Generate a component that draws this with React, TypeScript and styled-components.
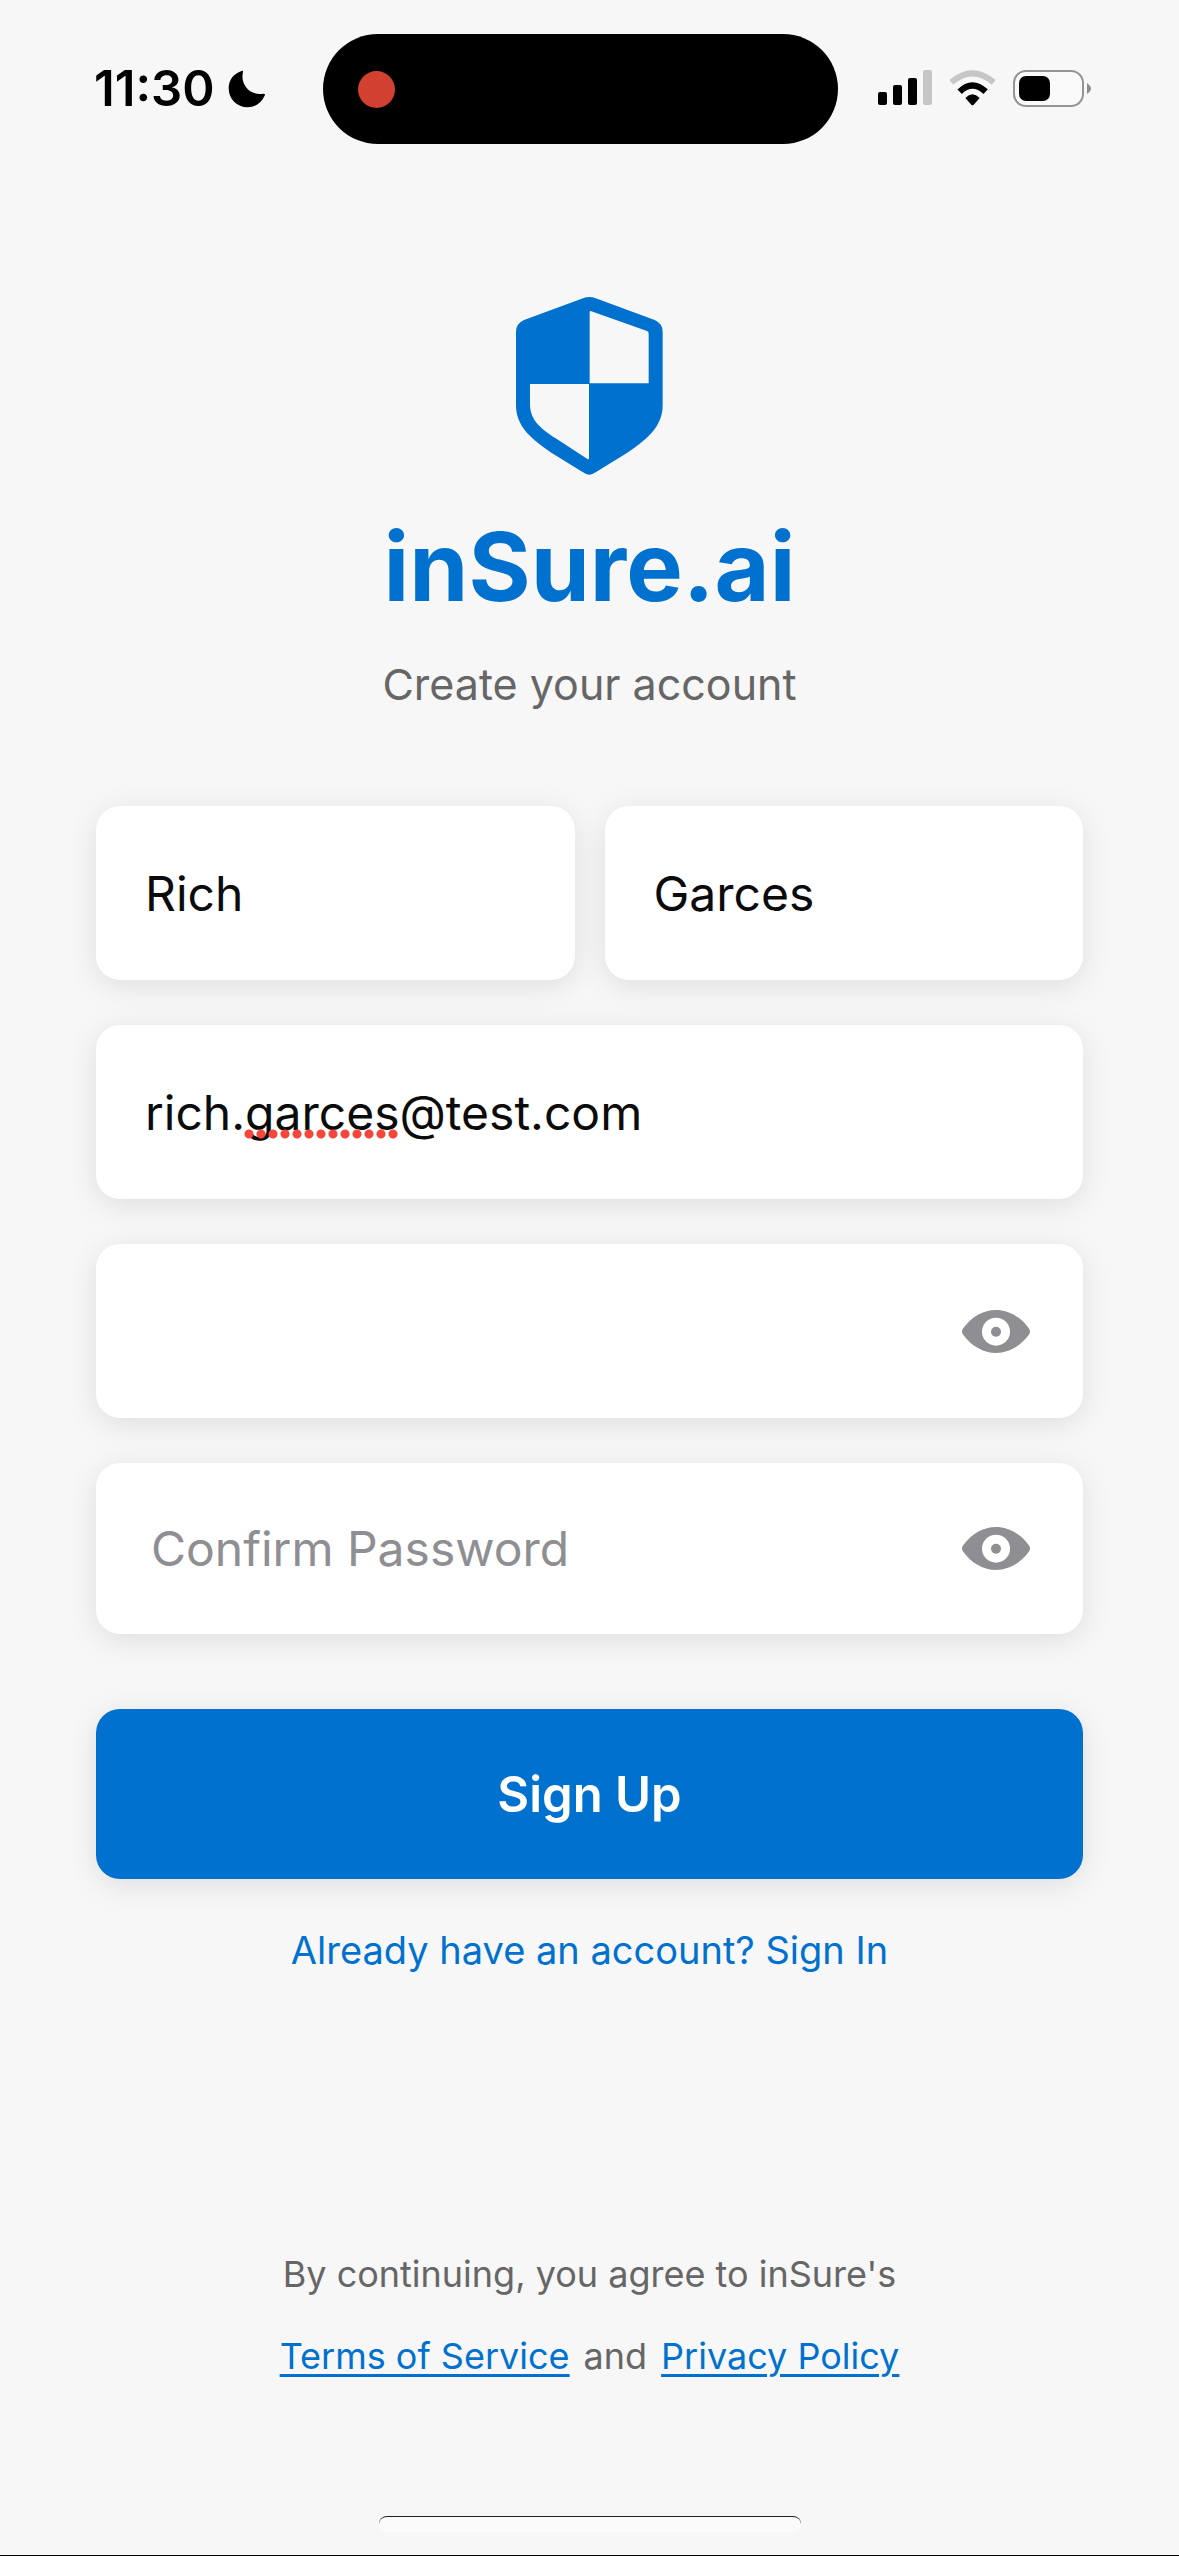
import React, { useState } from "react";
import styled, { createGlobalStyle } from "styled-components";

const color = {
  page: "#f7f7f7",
  brand: "#0071ce",
  muted: "#666666",
  hint: "#8e8e93",
  ink: "#0b0b0c",
};

const GlobalStyle = createGlobalStyle`
  *, *::before, *::after { box-sizing: border-box; }
  body {
    margin: 0;
    background: ${color.page};
    font-family: Inter, "Liberation Sans", sans-serif;
  }
`;

const Screen = styled.div`
  display: flex;
  flex-direction: column;
  min-height: 100vh;
  background: ${color.page};
  border-bottom: 1px solid #000;
`;

const StatusBar = styled.header`
  display: grid;
  grid-template-columns: 1fr auto 1fr;
  align-items: center;
  padding: 34px 88px 0 70px;
`;

const ClockGroup = styled.div`
  display: flex;
  align-items: center;
  gap: 13px;
  padding-left: 24px;
`;

const Clock = styled.time`
  font-size: 49px;
  line-height: 56px;
  font-weight: 600;
  color: #000;
`;

const Island = styled.div`
  display: flex;
  align-items: center;
  width: 515px;
  height: 110px;
  padding-left: 35px;
  border-radius: 55px;
  background: #000;
`;

const RecordDot = styled.span`
  width: 37px;
  height: 37px;
  border-radius: 50%;
  background: #d24130;
`;

const Indicators = styled.div`
  display: flex;
  align-items: center;
  justify-content: flex-end;
  gap: 17px;
  padding-bottom: 2px;
`;

const Main = styled.main`
  display: flex;
  flex: 1;
  flex-direction: column;
  align-items: center;
  padding: 153px 96px 0;
`;

const Title = styled.h1`
  margin: 34px 0 0;
  font-size: 95px;
  line-height: 116px;
  font-weight: 700;
  color: ${color.brand};
`;

const Subtitle = styled.p`
  margin: 32px 0 0;
  font-size: 43px;
  line-height: 54px;
  color: ${color.muted};
`;

const Form = styled.form`
  display: flex;
  flex-direction: column;
  gap: 45px;
  width: 100%;
  margin-top: 95px;
`;

const NameRow = styled.div`
  display: grid;
  grid-template-columns: 1fr 1fr;
  gap: 30px;
`;

const Field = styled.div<{ $empty?: boolean }>`
  position: relative;
  display: flex;
  align-items: center;
  min-width: 0;
  height: ${(p) => (p.$empty ? 171 : 174)}px;
  padding: 0 53px 0 ${(p) => (p.$empty ? 55 : 49)}px;
  border-radius: 24px;
  background: #fff;
  box-shadow: 0 6px 30px rgba(0, 0, 0, 0.1);
`;

const TextInput = styled.input`
  flex: 1;
  min-width: 0;
  height: 100%;
  padding: 0;
  border: 0;
  outline: 0;
  background: transparent;
  font: inherit;
  font-size: 48px;
  color: ${color.ink};

  &::placeholder {
    color: ${color.hint};
    opacity: 1;
  }
`;

const SpellingMark = styled.span`
  position: absolute;
  left: 147px;
  top: 104px;
  width: 156px;
  height: 10px;
  background: radial-gradient(circle at 6px 50%, #f5463c 4px, transparent 5px) 0 0 / 12px 10px repeat-x;
  pointer-events: none;
`;

const RevealButton = styled.button`
  display: flex;
  padding: 0;
  border: 0;
  background: none;
  cursor: pointer;
`;

const SubmitButton = styled.button`
  height: 170px;
  margin-top: 30px;
  border: 0;
  border-radius: 24px;
  background: ${color.brand};
  box-shadow: 0 6px 30px rgba(0, 0, 0, 0.1);
  font: inherit;
  font-size: 49px;
  font-weight: 600;
  color: #fff;
  cursor: pointer;
`;

const SignInLink = styled.a`
  margin-top: 48px;
  font-size: 38px;
  line-height: 46px;
  color: ${color.brand};
  text-decoration: none;
`;

const Legal = styled.footer`
  display: flex;
  flex-direction: column;
  align-items: center;
  padding-bottom: 119px;
  font-size: 36px;
  line-height: 82px;
  color: ${color.muted};
`;

const LegalRow = styled.div`
  display: flex;
  gap: 14px;
`;

const LegalLink = styled.a`
  color: ${color.brand};
  text-decoration: underline;
  text-decoration-thickness: 3px;
  text-underline-offset: 5px;
`;

const HomeIndicator = styled.div`
  align-self: center;
  width: 422px;
  height: 16px;
  margin-bottom: 23px;
  border-top: 1px solid #222;
  border-radius: 8px;
  background: #fbfbfb;
`;

const MoonIcon = () => (
  <svg width="38" height="38" viewBox="0 0 112 112" aria-hidden="true">
    <path d="M40 3 Q46 0 44 7 C36 40 62 76 104 70 Q111 69 108 76 C98 98 80 110 58 110 C26 110 2 86 2 54 C2 30 16 11 40 3Z" />
  </svg>
);

const SignalIcon = () => (
  <svg width="54" height="36" viewBox="0 0 54 36" aria-hidden="true">
    <rect x="0" y="22" width="9" height="13" rx="2" />
    <rect x="15" y="15" width="9" height="20" rx="2" />
    <rect x="30" y="8" width="9" height="27" rx="2" />
    <rect x="45" y="0" width="9" height="35" rx="2" fill="#c6c6c6" />
  </svg>
);

const WifiIcon = () => (
  <svg width="47" height="36" viewBox="0 0 141 108" aria-hidden="true">
    <path d="M7 37 Q70 -17 134 37" fill="none" stroke="#c6c6c6" strokeWidth="18" />
    <path d="M32 65 Q70 28 110 65" fill="none" stroke="#000" strokeWidth="19" />
    <path d="M49 84 Q70 62 92 84 L74 104 Q70 108 67 104Z" />
  </svg>
);

const BatteryIcon = () => (
  <svg width="78" height="37" viewBox="0 0 78 37" aria-hidden="true">
    <rect x="1" y="1" width="69" height="35" rx="12" fill="#fafafa" stroke="#949494" strokeWidth="2" />
    <rect x="6" y="6" width="31" height="25" rx="7" />
    <path d="M74 13 Q78 16 78 18.500 Q78 21 74 24Z" fill="#8c8c8c" />
  </svg>
);

const ShieldLogo = () => (
  <svg width="147" height="178" viewBox="106 82 441 534" role="img" aria-label="inSure.ai logo">
    <path
      fill={color.brand}
      d="M326 82 Q335 82 345 86 L522 151 Q546 162 546 186 V408 C546 442 530 474 503 500 Q480 523 440 549 L345 608 Q326 622 307 608 L212 549 Q172 523 149 500 C122 474 106 442 106 408 V186 Q106 162 130 151 L307 86 Q317 82 326 82Z"
    />
    <path fill={color.page} d="M327 127 Q327 123 332 125 L499 184 Q504 186 504 192 V341 H327Z" />
    <path fill={color.page} d="M148 343 H325 V565 Q325 571 319 567 L225 506 C170 470 148 445 148 402Z" />
  </svg>
);

const EyeIcon = () => (
  <svg width="68" height="43" viewBox="0 0 204 129" aria-hidden="true">
    <path
      fill={color.hint}
      d="M2 57 C28 20 65 0 102 0 C139 0 176 20 202 57 Q206 65 202 72 C176 109 139 129 102 129 C65 129 28 109 2 72 Q-2 65 2 57Z"
    />
    <circle cx="102" cy="65" r="42" fill="#fff" />
    <circle cx="102" cy="65" r="15" fill={color.hint} />
  </svg>
);

type PasswordFieldProps = { label: string; placeholder?: string };

const PasswordField = ({ label, placeholder }: PasswordFieldProps) => {
  const [shown, setShown] = useState(false);
  return (
    <Field $empty={Boolean(placeholder)}>
      <TextInput type={shown ? "text" : "password"} aria-label={label} placeholder={placeholder} />
      <RevealButton type="button" aria-label={`Show ${label}`} aria-pressed={shown} onClick={() => setShown(!shown)}>
        <EyeIcon />
      </RevealButton>
    </Field>
  );
};

export default function App() {
  return (
    <Screen>
      <GlobalStyle />
      <StatusBar>
        <ClockGroup>
          <Clock>11:30</Clock>
          <MoonIcon />
        </ClockGroup>
        <Island>
          <RecordDot />
        </Island>
        <Indicators>
          <SignalIcon />
          <WifiIcon />
          <BatteryIcon />
        </Indicators>
      </StatusBar>

      <Main>
        <ShieldLogo />
        <Title>inSure.ai</Title>
        <Subtitle>Create your account</Subtitle>

        <Form onSubmit={(event) => event.preventDefault()}>
          <NameRow>
            <Field>
              <TextInput type="text" aria-label="First Name" defaultValue="Rich" />
            </Field>
            <Field>
              <TextInput type="text" aria-label="Last Name" defaultValue="Garces" />
            </Field>
          </NameRow>
          <Field>
            <TextInput type="email" aria-label="Email" defaultValue="rich.garces@test.com" />
            <SpellingMark />
          </Field>
          <PasswordField label="Password" />
          <PasswordField label="Confirm Password" placeholder="Confirm Password" />
          <SubmitButton type="submit">Sign Up</SubmitButton>
        </Form>

        <SignInLink href="#sign-in">Already have an account? Sign In</SignInLink>
      </Main>

      <Legal>
        <div>By continuing, you agree to inSure's</div>
        <LegalRow>
          <LegalLink href="#terms">Terms of Service</LegalLink>
          <span>and</span>
          <LegalLink href="#privacy">Privacy Policy</LegalLink>
        </LegalRow>
      </Legal>
      <HomeIndicator />
    </Screen>
  );
}
